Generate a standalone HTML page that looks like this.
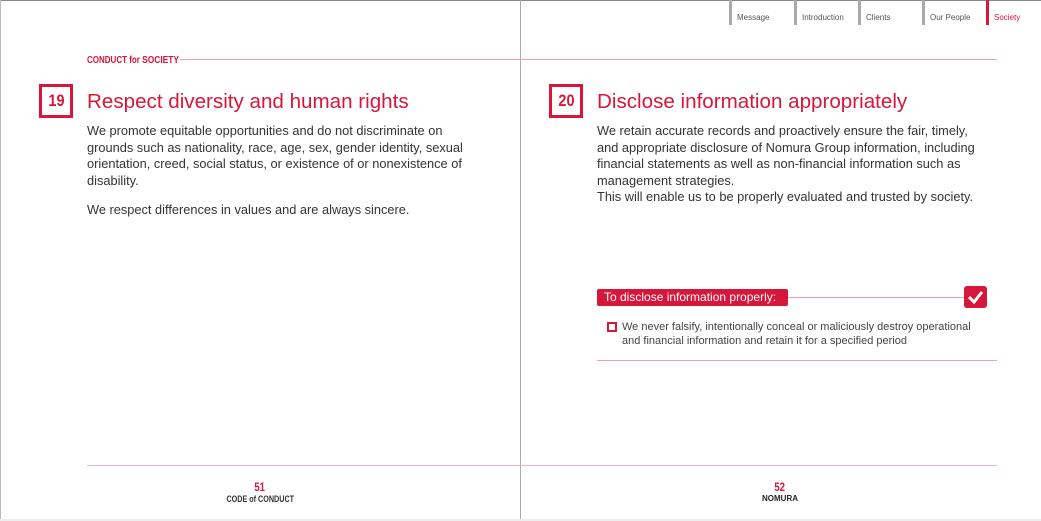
<!DOCTYPE html>
<html><head><style>
*{margin:0;padding:0;box-sizing:border-box}
body{width:1041px;height:521px;background:#fff;position:relative;overflow:hidden;font-family:"Liberation Sans",Arial,sans-serif;color:#333}
.a{position:absolute}
.tab{position:absolute;top:0;height:25px;border-left:3px solid #aaa;font-size:8px;color:#555;padding:13px 0 0 5px}
.num{position:absolute;width:34px;height:34px;border:3px solid #d6163a;color:#d6163a;font:bold 17px "Liberation Sans",sans-serif;text-align:center;line-height:28px}
.num span{display:inline-block;transform:scaleX(.85)}
.h{position:absolute;font-size:20.6px;color:#d6163a;font-weight:normal}
.p{position:absolute;font-size:12.8px;line-height:16.6px;color:#333}
.n{display:inline-block;transform:scaleX(.8);transform-origin:left}
</style></head><body>
<div class="a" style="left:0;top:0;width:1041px;height:1px;background:#888"></div>
<div class="a" style="left:0;top:0;width:1px;height:521px;background:#bbb"></div>
<div class="a" style="left:520px;top:0;width:1px;height:521px;background:#aaa"></div>
<div class="tab" style="left:729px;width:65px">Message</div>
<div class="tab" style="left:794px;width:64px">Introduction</div>
<div class="tab" style="left:858px;width:64px">Clients</div>
<div class="tab" style="left:922px;width:65px">Our People</div>
<div class="tab" style="left:986px;width:55px;border-left-color:#d6163a;color:#d6163a">Society</div>

<div class="a" style="left:87px;top:54px;font:bold 10px 'Liberation Sans',sans-serif;color:#d6163a;white-space:nowrap"><span class="n">CONDUCT for <span style="font-size:10.5px">SOCIETY</span></span></div>
<div class="a" style="left:180px;top:59px;width:817px;height:1px;background:#f2a0b0"></div>

<div class="num" style="left:39px;top:84px"><span>19</span></div>
<div class="h" style="left:87px;top:90px">Respect diversity and human rights</div>
<div class="p" style="left:87px;top:123px;width:395px">We promote equitable opportunities and do not discriminate on grounds such as nationality, race, age, sex, gender identity, sexual orientation, creed, social status, or existence of or nonexistence of disability.</div>
<div class="p" style="left:87px;top:202px">We respect differences in values and are always sincere.</div>

<div class="num" style="left:549px;top:84px"><span>20</span></div>
<div class="h" style="left:597px;top:90px">Disclose information appropriately</div>
<div class="p" style="left:597px;top:123px;width:390px">We retain accurate records and proactively ensure the fair, timely, and appropriate disclosure of Nomura Group information, including financial statements as well as non-financial information such as management strategies.<br>This will enable us to be properly evaluated and trusted by society.</div>

<div class="a" style="left:597px;top:297px;width:390px;height:1px;background:#f2a0b0"></div>
<div class="a" style="left:597px;top:289px;width:191px;height:17px;background:#d6163a;color:#fff;font-size:12px;line-height:17px;padding-left:7px;border-radius:2px">To disclose information properly:</div>
<div class="a" style="left:964px;top:286px;width:23px;height:22px;background:#d6163a;border-radius:3px"><svg width="23" height="22"><path d="M5 11 L10 16 L18 6" stroke="#fff" stroke-width="3" fill="none"/></svg></div>
<div class="a" style="left:607px;top:322px;width:10px;height:10px;border:2px solid #d6163a"></div>
<div class="a" style="left:622px;top:320px;font-size:11px;line-height:14px;color:#444;width:370px">We never falsify, intentionally conceal or maliciously destroy operational and financial information and retain it for a specified period</div>
<div class="a" style="left:597px;top:360px;width:400px;height:1px;background:#f2a0b0"></div>

<div class="a" style="left:87px;top:465px;width:910px;height:1px;background:#f2b0bd"></div>
<div class="a" style="left:200px;top:480px;width:120px;text-align:center;font:bold 12px 'Liberation Sans',sans-serif;color:#d6163a"><span style="display:inline-block;transform:scaleX(.8)">51</span></div>
<div class="a" style="left:200px;top:494px;width:120px;text-align:center;font:bold 9px 'Liberation Sans',sans-serif;color:#333"><span style="display:inline-block;transform:scaleX(.8)">CODE of CONDUCT</span></div>
<div class="a" style="left:720px;top:480px;width:120px;text-align:center;font:bold 12px 'Liberation Sans',sans-serif;color:#d6163a"><span style="display:inline-block;transform:scaleX(.8)">52</span></div>
<div class="a" style="left:720px;top:494px;width:120px;text-align:center;font:bold 8px 'Liberation Sans',sans-serif;color:#222">NOMURA</div>
<div class="a" style="left:0;top:519px;width:1041px;height:2px;background:#eee"></div>
</body></html>
